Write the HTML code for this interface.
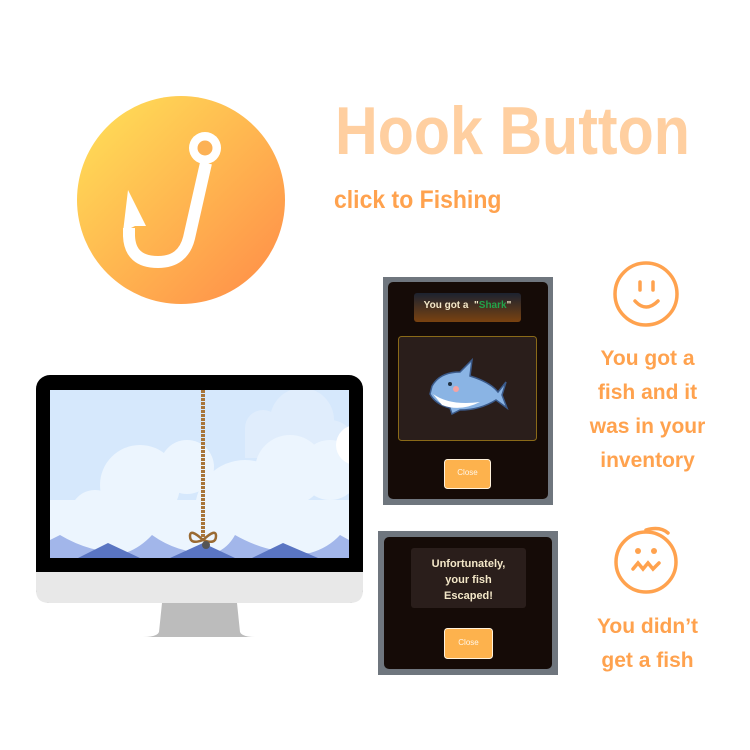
<!DOCTYPE html>
<html><head><meta charset="utf-8"><style>
html,body{margin:0;padding:0;background:#fff;width:750px;height:750px;overflow:hidden;position:relative;font-family:"Liberation Sans",sans-serif}
.a{position:absolute}
.t{color:#ffa24e;font-weight:bold;text-align:center}
</style></head><body>
<svg class="a" style="left:0;top:0" width="750" height="750">
<defs>
<linearGradient id="g" x1="0" y1="0" x2="1" y2="1"><stop offset="0" stop-color="#ffe358"/><stop offset="1" stop-color="#ff8a48"/></linearGradient>
<linearGradient id="tb" x1="0" y1="0" x2="0" y2="1"><stop offset="0" stop-color="#1c2230"/><stop offset="1" stop-color="#7a4210"/></linearGradient>
<clipPath id="sc"><rect x="50" y="390" width="299" height="168"/></clipPath>
</defs>
<circle cx="181" cy="200" r="104" fill="url(#g)"/>
<circle cx="205" cy="148" r="16" fill="#fff"/>
<circle cx="205" cy="148" r="7.5" fill="#fcb155"/>
<path d="M206,163 L189,238 Q183,262 158,262 Q130,262 129,236 L129,228" fill="none" stroke="#fff" stroke-width="12" stroke-linejoin="round"/>
<path d="M123,232 L128,190 L146,226 L135,226 Z" fill="#fff"/>
<!-- monitor -->
<rect x="36" y="375" width="327" height="228" rx="14" fill="#000"/>
<path d="M36,572 H363 V590 Q363,603 350,603 H49 Q36,603 36,590 Z" fill="#e8e8e8"/>
<path d="M162,603 H237 L240,632 Q242,637 256,637 H143 Q157,637 159,632 Z" fill="#bcbcbc"/>
<g clip-path="url(#sc)">
<rect x="50" y="390" width="299" height="168" fill="#d6e8fc"/>
<g fill="#e0edfc"><circle cx="263" cy="428" r="18"/><circle cx="302" cy="420" r="32"/><circle cx="330" cy="445" r="25"/><rect x="245" y="428" width="104" height="30"/></g>
<g fill="#ecf5fe">
<circle cx="95" cy="515" r="25"/><circle cx="140" cy="485" r="40"/><circle cx="187" cy="467" r="27"/>
<circle cx="245" cy="510" r="50"/><circle cx="290" cy="470" r="35"/><circle cx="330" cy="470" r="30"/>
<rect x="50" y="500" width="299" height="58"/>
</g>
<circle cx="356" cy="445" r="20" fill="#fff"/>
<path d="M50,558 V540 L60,535 Q90,553 125,553 Q140,548 152,535 Q180,555 215,553 Q228,548 235,535 Q270,555 310,553 Q328,548 340,535 L349,540 V558 Z" fill="#a2b6ea"/>
<path d="M78,558 L108,543 L140,558 Z M170,558 L203,543 L235,558 Z M252,558 L283,543 L318,558 Z" fill="#5a75c2"/>
</g>
<line x1="203" y1="390" x2="203" y2="540" stroke="#a8753a" stroke-width="4" stroke-dasharray="3 1"/>
<path d="M203,540 Q190,528 190,536 Q190,545 203,540 Q216,528 216,536 Q216,545 203,540" fill="none" stroke="#9a6a32" stroke-width="2.5"/>
<circle cx="206" cy="545" r="4" fill="#555"/>
<!-- popup 1 -->
<rect x="383" y="277" width="170" height="228" fill="#6f767e"/>
<rect x="388" y="282" width="160" height="217" rx="5" fill="#150b07"/>
<rect x="414" y="293" width="107" height="29" rx="3" fill="url(#tb)"/>
<rect x="398.5" y="336.5" width="138" height="104" rx="3" fill="#2a1e1b" stroke="#8a6a18"/>
<path d="M432,386 Q440,372 460,372 L472,360 L470,376 Q490,382 498,392 L506,382 L502,395 L507,408 L496,400 Q480,410 460,410 L452,414 L450,408 Q435,404 430,394 Z" fill="#8ab4e4" stroke="#3b5a8a" stroke-width="1.5"/>
<path d="M433,394 Q450,406 480,402 Q460,412 442,405 Z" fill="#fff"/>
<circle cx="450" cy="384" r="2" fill="#234"/><circle cx="456" cy="389" r="3" fill="#f5a3a3"/>
<rect x="444.5" y="459.5" width="46" height="29" rx="3" fill="#fdb24d" stroke="#fff2dc"/>
<!-- popup 2 -->
<rect x="378" y="531" width="180" height="144" fill="#6f767e"/>
<rect x="384" y="537" width="168" height="132" rx="5" fill="#150b07"/>
<rect x="411" y="548" width="115" height="60" rx="3" fill="#2a1e1b"/>
<rect x="444.5" y="628.5" width="48" height="30" rx="3" fill="#fdb24d" stroke="#fff2dc"/>
<!-- faces -->
<g fill="none" stroke="#ffa24e" stroke-width="3.5" stroke-linecap="round">
<circle cx="646" cy="294" r="31"/>
<path d="M640,282 V290 M653,282 V290 M635,301 Q646,313 658,301"/>
<circle cx="646" cy="562" r="30"/>
<path d="M633,569 L638,563 L643,569 L648,563 L653,569 L659,563"/>
<path d="M646,530 Q660,526 668,533"/>
</g>
<circle cx="638" cy="551" r="3" fill="#ffa24e"/><circle cx="654" cy="551" r="3" fill="#ffa24e"/>
</svg>
<div class="a" style="left:335px;top:92px;font-size:68px;font-weight:bold;color:#ffcfa0;white-space:nowrap;transform:scaleX(0.87);transform-origin:left top">Hook Button</div>
<div class="a" style="left:334px;top:186px;font-size:25px;font-weight:bold;color:#ffa24e;white-space:nowrap;transform:scaleX(0.92);transform-origin:left top">click to Fishing</div>
<div class="a t" style="left:575px;top:342px;width:145px;font-size:21px;line-height:34px">You got a<br>fish and it<br>was in your<br>inventory</div>
<div class="a t" style="left:575px;top:610px;width:145px;font-size:21px;line-height:34px">You didn’t<br>get a fish</div>
<div class="a" style="left:414px;top:300px;width:107px;text-align:center;font-size:10px;font-weight:bold;color:#f3e7c8">You got a &nbsp;"<span style="color:#22a34a">Shark</span>"</div>
<div class="a" style="left:411px;top:556px;width:115px;text-align:center;font-size:11px;line-height:16px;font-weight:bold;color:#f3e7c8">Unfortunately,<br>your fish<br>Escaped!</div>
<div class="a" style="left:444px;top:468px;width:47px;text-align:center;font-size:8px;color:#fff6e8">Close</div>
<div class="a" style="left:444px;top:638px;width:49px;text-align:center;font-size:8px;color:#fff6e8">Close</div>
</body></html>
